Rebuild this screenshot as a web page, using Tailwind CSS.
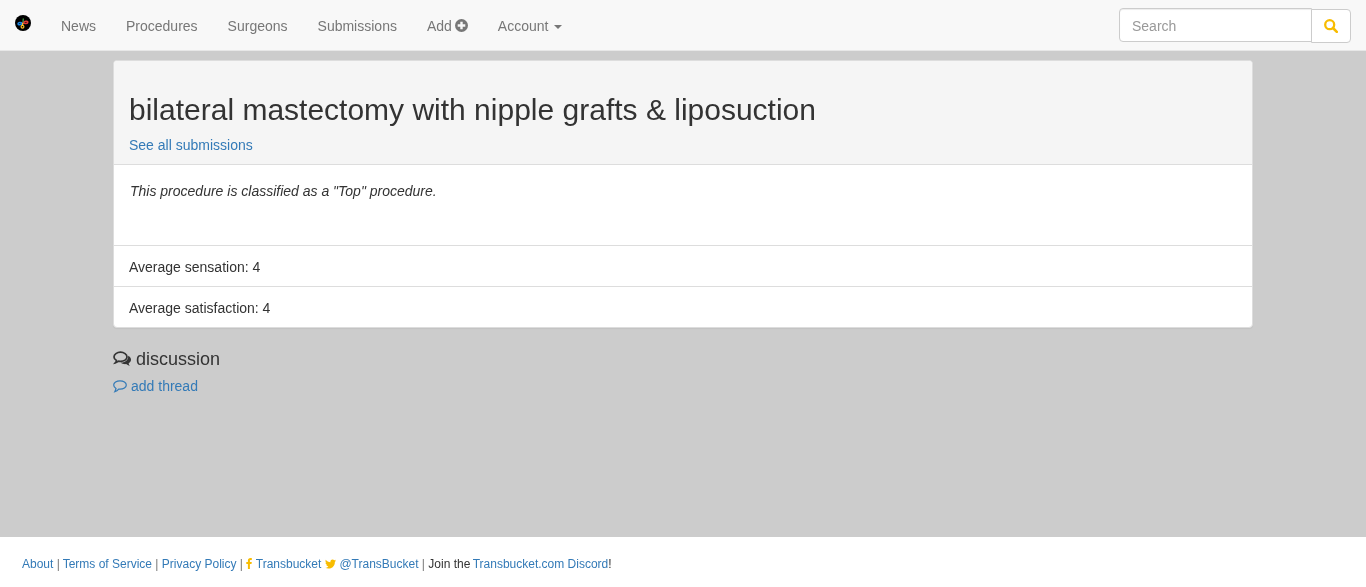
<!DOCTYPE html>
<html lang="en">
<head>
  <meta charset="UTF-8">
  <meta name="viewport" content="width=device-width, initial-scale=1.0">
  <title>bilateral mastectomy with nipple grafts &amp; liposuction - Transbucket</title>
  <script src="https://cdn.jsdelivr.net/npm/@tailwindcss/browser@4"></script>
</head>
<body class="bg-[#cccccc] text-[#333333] text-[14px] leading-[20px] font-['Liberation_Sans',Arial,sans-serif] [will-change:transform] h-screen overflow-hidden flex flex-col">

  <!-- Navbar -->
  <nav class="h-[51px] shrink-0 bg-[#f8f8f8] border-b border-[#e7e7e7] flex items-start">
    <a href="#" class="w-[46px] h-[50px] pl-[15px] pt-[15px] shrink-0">
      <svg class="w-[16px] h-[16px]" viewBox="0 0 16 16">
        <circle cx="8" cy="8" r="8" fill="#000"/>
        <path d="M7.500 8.300C6 7 3 7.300 3 8.800s3 1.300 4.500-.5z" fill="none" stroke="#1e88e5" stroke-width="1.500"/>
        <path d="M8 7.700C9.500 6 12.800 5.800 12.800 7.300S9.700 9 8 7.700z" fill="none" stroke="#e53935" stroke-width="1.500"/>
        <path d="M7.800 8l-.3 2.500" fill="none" stroke="#fbc02d" stroke-width="1.400"/>
        <circle cx="7.500" cy="11.800" r="1.400" fill="none" stroke="#fbc02d" stroke-width="1.200"/>
        <path d="M8.300 3.500L8 7.500" stroke="#43a047" stroke-width="1.300"/>
      </svg>
    </a>
    <ul class="flex text-[#777777]">
      <li><a href="#" class="block px-[15px] pt-[16px]">News</a></li>
      <li><a href="#" class="block px-[15px] pt-[16px]">Procedures</a></li>
      <li><a href="#" class="block px-[15px] pt-[16px]">Surgeons</a></li>
      <li><a href="#" class="block px-[15px] pt-[16px]">Submissions</a></li>
      <li>
        <a href="#" class="flex items-center gap-[3px] px-[15px] pt-[16px]">Add
          <svg class="w-[13px] h-[13px] -mt-px" viewBox="0 0 12 12">
            <circle cx="6" cy="6" r="6" fill="#777777"/>
            <path d="M6 2.500v7M2.500 6h7" stroke="#f8f8f8" stroke-width="2.200"/>
          </svg>
        </a>
      </li>
      <li>
        <a href="#" class="flex items-center gap-[6px] px-[15px] pt-[16px]">Account
          <span class="w-0 h-0 mt-[2px] border-x-[4px] border-x-transparent border-t-[4px] border-t-[#777777]"></span>
        </a>
      </li>
    </ul>
    <form class="ml-auto mr-[15px] mt-[8px] flex items-start">
      <input type="text" placeholder="Search" class="w-[193px] h-[34px] px-[12px] pt-px bg-white border border-[#cccccc] rounded-l-[4px] text-[14px] text-[#555555] placeholder:text-[#999999] shadow-[inset_0_1px_1px_rgba(0,0,0,0.075)] outline-none">
      <button type="button" class="w-[40px] h-[34px] -ml-px mt-px bg-white border border-[#cccccc] rounded-r-[4px] flex items-center justify-center">
        <svg class="w-[14px] h-[14px]" viewBox="0 0 14 14" fill="none" stroke="#f8bc00">
          <circle cx="5.700" cy="5.700" r="4.500" stroke-width="2.300"/>
          <path d="M9 9l3.800 3.800" stroke-width="2.600" stroke-linecap="round"/>
        </svg>
      </button>
    </form>
  </nav>

  <!-- Contenido -->
  <main class="w-[1140px] mx-auto mt-[9px] flex-1">
    <section class="bg-white border border-[#dddddd] rounded-[4px] shadow-[0_1px_1px_rgba(0,0,0,0.05)]">
      <header class="bg-[#f5f5f5] border-b border-[#dddddd] rounded-t-[3px] px-[15px] pt-[32px] pb-[9px]">
        <h2 class="text-[30px] leading-[33px] font-normal">bilateral mastectomy with nipple grafts &amp; liposuction</h2>
        <a href="#" class="block mt-[9px] text-[#337ab7]">See all submissions</a>
      </header>
      <div class="h-[81px] pl-[16px] pr-[15px] pt-[16px] border-b border-[#dddddd]">
        <em>This procedure is classified as a "Top" procedure.</em>
      </div>
      <div class="h-[41px] px-[15px] py-[11px] border-b border-[#dddddd]">Average sensation: 4</div>
      <div class="h-[40px] px-[15px] py-[11px]">Average satisfaction: 4</div>
    </section>

    <h4 class="mt-[21px] text-[18px] leading-[20px] font-normal flex items-center gap-[5px]">
      <svg class="w-[18px] h-[16px]" viewBox="0 0 18 16" fill="none" stroke="#333333">
        <path d="M7.500 1.200C4 1.200 1 3.300 1 5.900c0 1.500 1 2.800 2.500 3.700-.2.800-.6 1.500-1.200 2.200 1.400-.3 2.500-.9 3.400-1.600.6.100 1.200.2 1.800.2 3.500 0 6.500-2 6.500-4.500s-3-4.700-6.500-4.700z" stroke-width="1.700"/>
        <path d="M15.200 4.800C17 5.800 18 7.200 18 8.800c0 1.500-.9 2.700-2.400 3.600.2.900.6 1.700 1.200 2.500-1.500-.3-2.800-1-3.700-1.800-2 .2-4.300-.3-5.500-1.600 3.900.4 8-2 7.600-6.700z" fill="#333333" stroke="none"/>
      </svg>
      discussion
    </h4>
    <a href="#" class="mt-[7px] flex items-center gap-[4px] text-[#337ab7]">
      <svg class="w-[14px] h-[13px] mt-px" viewBox="0 0 14 13" fill="none" stroke="#337ab7" stroke-width="1.200">
        <path d="M7 .8C3.500.8.700 2.700.700 5c0 1.400.9 2.600 2.300 3.400-.1 1-.5 2-1.200 3.300 1.600-.5 3-1.500 3.900-2.600.4.100.9.100 1.300.1 3.500 0 6.300-1.900 6.300-4.200S10.500.8 7 .8z"/>
      </svg>
      add thread
    </a>
  </main>

  <!-- Footer -->
  <footer class="h-[50px] shrink-0 bg-white pl-[22px] pt-[17px] text-[12px] leading-[20px] flex items-start whitespace-pre">
    <a href="#" class="text-[#337ab7]">About</a><span class="text-[#777777] -mr-[.5px]"> | </span><a href="#" class="text-[#337ab7]">Terms of Service</a><span class="text-[#777777]"> | </span><a href="#" class="text-[#337ab7]">Privacy Policy</a><span class="text-[#777777]"> | </span>
    <svg class="w-[6px] h-[11px] mt-[4px] mr-[3.500px]" viewBox="0 0 6 11"><path d="M3.900 11V6h1.600l.3-2H3.900V2.800c0-.6.200-.9.900-.9h1V.1C5.500 0 5 0 4.400 0 2.900 0 1.900.9 1.900 2.500V4H.3v2h1.600v5z" fill="#f8bc00"/></svg>
    <a href="#" class="text-[#337ab7]">Transbucket</a>
    <svg class="w-[11px] h-[10px] mt-[5px] ml-[4px] mr-[3px]" viewBox="0 0 24 20"><path d="M24 2.400c-.9.400-1.800.7-2.800.8 1-.6 1.800-1.600 2.200-2.700-1 .6-2 1-3.100 1.200C19.300.7 18 0 16.600 0c-3.200 0-5.500 3-4.800 6C7.700 5.800 4.100 3.900 1.700.9.400 3.100 1 6 3.200 7.500c-.8 0-1.600-.2-2.200-.6 0 2.300 1.600 4.400 4 4.900-.7.200-1.500.2-2.200.1.600 2 2.500 3.400 4.600 3.400C5.300 17.500 2.700 18.200 0 17.900 2.200 19.300 4.800 20 7.500 20c9.100 0 14.300-7.700 14-14.600 1-.7 1.800-1.600 2.500-3z" fill="#f8bc00"/></svg>
    <a href="#" class="text-[#337ab7]">@TransBucket</a><span class="text-[#777777]"> | </span><span class="-mr-px">Join the </span><a href="#" class="text-[#337ab7]">Transbucket.com Discord</a><span>!</span>
  </footer>

</body>
</html>
